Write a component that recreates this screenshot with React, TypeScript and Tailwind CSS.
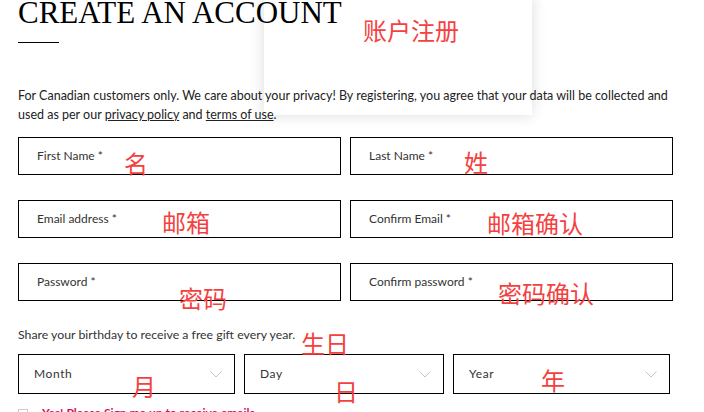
import React from "react";

const sans = "font-['Lato','Open_Sans',sans-serif]";
const cjk = "font-['Noto_Sans_CJK_SC',sans-serif]";

const Field = ({ label }: { label: string }) => (
  <div className="h-[38px] border border-black flex items-center pl-[18px]">
    <span className={`${sans} text-[12px] text-[#333]`}>{label}</span>
  </div>
);

const Chevron = () => (
  <svg width="12" height="7" viewBox="0 0 12 7" fill="none">
    <path d="M0.5 0.5 L6 6 L11.5 0.5" stroke="#c4c4c4" strokeWidth="1" />
  </svg>
);

const Select = ({ label, w }: { label: string; w: string }) => (
  <div className={`${w} h-[40px] border border-black flex items-center justify-between pl-[15px] pr-[12px]`}>
    <span className={`${sans} text-[12px] tracking-[0.6px] text-[#333]`}>{label}</span>
    <Chevron />
  </div>
);

// red annotations placed over the form
const notes = [
  { t: "账户注册", c: "left-[363px] top-[15px]" },
  { t: "名", c: "left-[124px] top-[148px]" },
  { t: "姓", c: "left-[464px] top-[147px]" },
  { t: "邮箱", c: "left-[162px] top-[207px]" },
  { t: "邮箱确认", c: "left-[487px] top-[208px]" },
  { t: "密码", c: "left-[179px] top-[283px]" },
  { t: "密码确认", c: "left-[498px] top-[278px]" },
  { t: "生日", c: "left-[301px] top-[328px]" },
  { t: "月", c: "left-[132px] top-[371px]" },
  { t: "日", c: "left-[334px] top-[376px]" },
  { t: "年", c: "left-[541px] top-[365px]" },
];

export default function App() {
  return (
    <div className="relative w-[704px] h-[412px] overflow-hidden bg-white">
      {/* popup card behind the heading */}
      <div className="absolute left-[264px] top-[-4px] w-[268px] h-[119px] bg-white shadow-[0_0_14px_rgba(0,0,0,0.14)]" />

      <div className="relative pl-[18px] w-[673px]">
        <h1 className="font-['Liberation_Serif',serif] text-[31px] leading-[26px] text-black">
          CREATE AN ACCOUNT
        </h1>
        <div className="mt-[16px] h-px w-[41px] bg-black" />

        <p className={`${sans} mt-[43px] text-[12.5px] leading-[19px] text-[#222]`}>
          For Canadian customers only. We care about your privacy! By registering, you agree that your data will be collected and used as per our{" "}
          <span className="underline">privacy policy</span> and{" "}
          <span className="underline">terms of use</span>.
        </p>

        <div className="mt-[13px] grid grid-cols-2 gap-x-[9px] gap-y-[25px]">
          <Field label="First Name *" />
          <Field label="Last Name *" />
          <Field label="Email address *" />
          <Field label="Confirm Email *" />
          <Field label="Password *" />
          <Field label="Confirm password *" />
        </div>

        <p className={`${sans} mt-[26px] text-[12.3px] leading-[16px] text-[#333]`}>
          Share your birthday to receive a free gift every year.
        </p>

        <div className="mt-[11px] flex gap-[9px]">
          <Select label="Month" w="w-[217px]" />
          <Select label="Day" w="w-[200px]" />
          <Select label="Year" w="w-[217px]" />
        </div>

        <div className="mt-[15px] flex items-start gap-[14px]">
          <div className="w-[10px] h-[10px] border border-[#ccc]" />
          <span className={`${sans} text-[12px] leading-[14px] font-bold text-[#d4145a] -mt-[3px]`}>
            Yes! Please Sign me up to receive emails
          </span>
        </div>
      </div>

      {notes.map((n) => (
        <span
          key={n.t}
          className={`absolute ${n.c} ${cjk} text-[24px] leading-[29px] text-[#f4413f]`}
        >
          {n.t}
        </span>
      ))}
    </div>
  );
}
